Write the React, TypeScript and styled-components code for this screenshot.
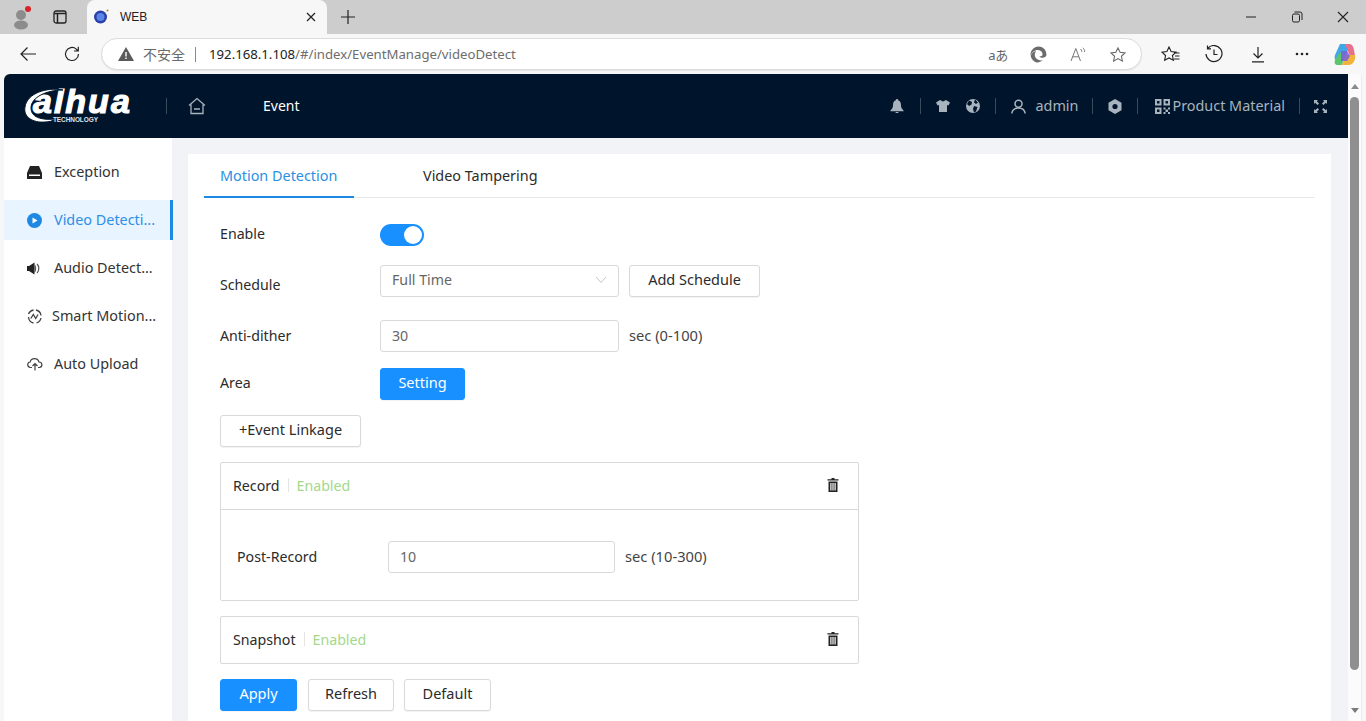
import React from "react";
import styled, { createGlobalStyle } from "styled-components";

const Global = createGlobalStyle`
  html, body { margin: 0; padding: 0; height: 721px; overflow: hidden; background: #f7f7f7; }
  * { box-sizing: border-box; }
  body { font-family: "Noto Sans", "Open Sans", "Noto Sans CJK SC", sans-serif; font-size: 14px; color: #2b2b2b; }
`;

const Shell = styled.div`display: flex; flex-direction: column; width: 1366px; height: 721px; overflow: hidden;`;

const TabStrip = styled.div`display: flex; align-items: flex-start; height: 34px; background: #cdcdcd; flex: none;`;
const StripIcon = styled.div<{ $w: number }>`width: ${p => p.$w}px; height: 34px; display: flex; align-items: center; justify-content: center; flex: none;`;
const BrowserTab = styled.div`
  width: 240px; height: 34px; margin-left: 11px; background: #f7f7f7; border-radius: 8px 8px 0 0;
  display: flex; align-items: center; padding: 0 11px 0 6px; font-size: 12px; color: #222; flex: none;
`;
const TabTitle = styled.span`margin-left: 11px; flex: 1; font-family: "Liberation Sans", sans-serif;`;
const Spacer = styled.div`flex: 1;`;
const WinBtn = styled.div`width: 46px; height: 34px; display: flex; align-items: center; justify-content: center; flex: none;`;

const Toolbar = styled.div`display: flex; align-items: center; height: 40px; background: #f7f7f7; flex: none;`;
const ToolBtn = styled.div<{ $w: number }>`width: ${p => p.$w}px; height: 40px; display: flex; align-items: center; justify-content: center; flex: none;`;
const AddressBar = styled.div`
  width: 1041px; height: 32px; margin: 0 8px 0 12px; flex: none; background: #fff; border: 1px solid #dcdcdc; border-radius: 16px;
  display: flex; align-items: center; padding-left: 16px; font-size: 13.2px; color: #6d6d6d; box-shadow: 0 1px 1px #e4e4e4;
`;
const Insecure = styled.span`margin-left: 9px; color: #6a6a6a; font-size: 14px;`;
const AddrDivider = styled.span`width: 1px; height: 15px; background: #8a8a8a; margin: 0 13px 0 10px;`;
const Host = styled.span`color: #222;`;
const AddrIcons = styled.div`margin-left: auto; display: flex; align-items: center; padding-right: 3px;`;
const AddrIcon = styled.span`width: 40px; display: flex; justify-content: center; align-items: center;`;
const Translate = styled.span`font-size: 13px; color: #666; letter-spacing: -0.5px; font-family: "Noto Sans", "Noto Sans CJK JP", sans-serif;`;

const Viewport = styled.div`flex: 1; display: flex; padding: 0 4px; min-height: 0;`;
const Frame = styled.div`flex: 1; display: flex; flex-direction: column; min-width: 0;`;
const Scrollbar = styled.div`width: 14px; flex: none; background: #fbfbfb; display: flex; flex-direction: column; align-items: center; border-right: 1px solid #ececec;`;
const ScrollUp = styled.div`width: 0; height: 0; margin-top: 10px; border-left: 4px solid transparent; border-right: 4px solid transparent; border-bottom: 5px solid #8a8a8a;`;
const ScrollThumb = styled.div`width: 9px; height: 573px; margin-top: 8px; background: #8f8f8f; border-radius: 4.5px;`;
const ScrollDown = styled.div`width: 0; height: 0; margin-top: 38px; border-left: 4px solid transparent; border-right: 4px solid transparent; border-top: 5px solid #7a7a7a;`;

const Header = styled.header`
  height: 64px; flex: none; background: #00152b; border-radius: 6px 0 0 0; display: flex; align-items: center; color: #fff;
`;
const LogoBox = styled.div`position: relative; width: 162px; height: 64px; flex: none;`;
const LogoWord = styled.span`
  position: absolute; left: 29px; top: 12px; font: italic 700 34px/30px "Liberation Sans", sans-serif; color: #fff; letter-spacing: 2px;
  -webkit-text-stroke: 1.2px #fff;
`;
const LogoSub = styled.span`position: absolute; left: 49px; top: 42px; font: 700 6.5px/7px "Liberation Sans", sans-serif; color: #dfe3e8; letter-spacing: -0.1px;`;
const LogoSwoosh = styled.svg`position: absolute; left: 20px; top: 15px;`;
const HeadDivider = styled.span<{ $m?: string }>`width: 1px; height: 16px; background: #3c4b5c; flex: none; margin: ${p => p.$m || "0"};`;
const HomeIcon = styled.div`margin-left: 21px; width: 18px; display: flex;`;
const NavLabel = styled.span`margin-left: 57px; font-size: 14px; color: #fff; padding-bottom: 2px;`;
const HeadRight = styled.div`margin-left: auto; display: flex; align-items: center; height: 64px; padding-right: 21px; color: #a9b3be; font-size: 14.4px;`;
const HeadIcon = styled.span<{ $m?: string }>`display: flex; flex: none; margin: ${p => p.$m || "0"};`;
const HeadText = styled.span<{ $ml: number }>`margin-left: ${p => p.$ml}px; padding-bottom: 2px;`;

const Body = styled.div`flex: 1; display: flex; min-height: 0; background: #f1f3f6;`;
const Sidebar = styled.nav`width: 168px; flex: none; background: #fff; padding-top: 14px;`;
const SideItem = styled.div<{ $active?: boolean }>`
  height: 40px; margin: 0 ${p => (p.$active ? "-1px" : "0")} 8px 0; display: flex; align-items: center; padding: 0 0 2px 23px;
  color: ${p => (p.$active ? "#2d8fe6" : "#333")}; background: ${p => (p.$active ? "#e8f4ff" : "transparent")};
  border-right: ${p => (p.$active ? "3px solid #1e88e5" : "0")};
  white-space: nowrap; font-size: 14.4px;
`;
const SideIcon = styled.span<{ $w: number }>`width: ${p => p.$w}px; flex: none; display: flex; align-items: center; padding-top: 2px;`;

const Content = styled.main`flex: 1; padding: 16px 17px 0 16px; min-width: 0;`;
const Card = styled.section`background: #fff; height: 600px; padding: 0 16px;`;
const Tabs = styled.div`height: 44px; display: flex; border-bottom: 1px solid #e8e8e8;`;
const TabItem = styled.div<{ $active?: boolean; $w: number }>`
  width: ${p => p.$w}px; height: 44px; padding: 12px 16px 0; font-size: 14.4px; line-height: 20px; white-space: nowrap;
  color: ${p => (p.$active ? "#2b8fe3" : "#2b2b2b")}; border-bottom: ${p => (p.$active ? "2px solid #1e88e5" : "0")};
  margin-right: ${p => (p.$active ? "53px" : "0")};
`;
const Form = styled.div`padding: 0 0 0 16px; width: 655px;`;
const Row = styled.div<{ $h: number; $mt?: number }>`display: flex; align-items: center; height: ${p => p.$h}px; margin-top: ${p => p.$mt || 0}px;`;
const Label = styled.span<{ $w?: number; $dy?: number }>`width: ${p => p.$w || 160}px; flex: none; position: relative; top: ${p => p.$dy || 0}px; font-size: 14.2px;`;
const Toggle = styled.div`width: 44px; height: 22px; border-radius: 11px; background: #1890ff; position: relative;`;
const Knob = styled.span`position: absolute; right: 2px; top: 2px; width: 18px; height: 18px; border-radius: 50%; background: #fff;`;
const Field = styled.div<{ $w: number; $pb?: number }>`
  width: ${p => p.$w}px; height: 32px; flex: none; border: 1px solid #d9d9d9; border-radius: 3px; background: #fff; padding: 0 11px ${p => p.$pb ?? 1}px;
  display: flex; align-items: center; justify-content: space-between; color: #666; font-size: 14.2px;
`;
const Btn = styled.div<{ $w: number; $primary?: boolean; $ml?: number }>`
  width: ${p => p.$w}px; height: 32px; flex: none; margin-left: ${p => p.$ml || 0}px; border-radius: 3px; padding-bottom: 5px;
  display: flex; align-items: center; justify-content: center; font-size: 14.5px;
  background: ${p => (p.$primary ? "#1890ff" : "#fff")}; color: ${p => (p.$primary ? "#fff" : "#2b2b2b")};
  border: 1px solid ${p => (p.$primary ? "#1890ff" : "#d9d9d9")};
  box-shadow: 0 1px 1px rgba(0,0,0,0.05);
`;
const Unit = styled.span`margin-left: 10px; color: #444; white-space: nowrap; font-size: 14.7px; padding-bottom: 2px;`;
const Panel = styled.div<{ $mt: number }>`border: 1px solid #d9d9d9; margin-top: ${p => p.$mt}px; width: 639px; border-radius: 2px;`;
const PanelHead = styled.div`height: 46px; display: flex; align-items: center; padding: 0 19px 2px 12px; font-size: 14.2px;`;
const PanelBody = styled.div`border-top: 1px solid #d9d9d9; height: 91px; display: flex; align-items: center; padding: 3px 0 0 16px;`;
const PanelSep = styled.span`width: 1px; height: 14px; background: #e4e4e4; margin: 0 8px;`;
const Enabled = styled.span`color: #a3d98c;`;
const TrashWrap = styled.span`margin-left: auto; display: flex;`;

const Trash = () => (
  <svg width="12" height="14" viewBox="0 0 12 14" fill="#222">
    <path d="M4.5 0h3v1.2H11.500v1.300H.5V1.200h4zM1.500 3.500h9V14h-9zM3.300 5v7.500h1.200V5zM5.400 5v7.500h1.200V5zM7.500 5v7.500h1.200V5z" fillRule="evenodd" />
  </svg>
);

export default function App() {
  return (
    <Shell>
      <Global />
      <TabStrip>
        <StripIcon $w={44}>
          <svg width="24" height="26" viewBox="0 0 24 26">
            <circle cx="11" cy="11" r="5" fill="#8c8c8c" />
            <ellipse cx="11" cy="21" rx="7" ry="4.500" fill="#8c8c8c" />
            <circle cx="18" cy="5" r="3" fill="#d8232a" />
          </svg>
        </StripIcon>
        <StripIcon $w={32}>
          <svg width="14" height="14" viewBox="0 0 14 14" fill="none" stroke="#222" strokeWidth="1.300">
            <rect x="1" y="1" width="12" height="12" rx="2" />
            <path d="M1 3.500h12M4.500 3.500V13" strokeWidth="1.500" />
          </svg>
        </StripIcon>
        <BrowserTab>
          <svg width="16" height="16" viewBox="0 0 16 16">
            <circle cx="7.500" cy="8" r="6.500" fill="#2b3fa8" />
            <circle cx="7.500" cy="8" r="4" fill="#5a86e8" />
            <circle cx="14.500" cy="1.500" r="1" fill="#c9772e" />
          </svg>
          <TabTitle>WEB</TabTitle>
          <svg width="10" height="10" viewBox="0 0 10 10" stroke="#222" strokeWidth="1.200">
            <path d="M1 1l8 8M9 1l-8 8" />
          </svg>
        </BrowserTab>
        <StripIcon $w={42}>
          <svg width="16" height="16" viewBox="0 0 16 16" stroke="#222" strokeWidth="1.200">
            <path d="M8 1v14M1 8h14" />
          </svg>
        </StripIcon>
        <Spacer />
        <WinBtn>
          <svg width="12" height="2" viewBox="0 0 12 2" stroke="#222"><path d="M1 1h10" /></svg>
        </WinBtn>
        <WinBtn>
          <svg width="12" height="12" viewBox="0 0 12 12" fill="none" stroke="#222">
            <rect x="1.500" y="3" width="7" height="8" rx="1.500" />
            <path d="M3.500 1h5.500a2 2 0 0 1 2 2v6" />
          </svg>
        </WinBtn>
        <WinBtn>
          <svg width="12" height="12" viewBox="0 0 12 12" stroke="#222" strokeWidth="1.100"><path d="M1 1l10 10M11 1L1 11" /></svg>
        </WinBtn>
      </TabStrip>
      <Toolbar>
        <ToolBtn $w={55}>
          <svg width="18" height="16" viewBox="0 0 18 16" fill="none" stroke="#222" strokeWidth="1.200"><path d="M17 8H2M8.500 1.500L2 8l6.500 6.500" /></svg>
        </ToolBtn>
        <ToolBtn $w={34}>
          <svg width="18" height="18" viewBox="0 0 18 18" fill="none" stroke="#222" strokeWidth="1.200">
            <path d="M15.500 9a6.500 6.500 0 1 1-2.200-4.900L15 6M15.300 1.800V6H11" />
          </svg>
        </ToolBtn>
        <AddressBar>
          <svg width="16" height="14" viewBox="0 0 16 14"><path d="M8 0l8 14H0z" fill="#5a5a5a" /><path d="M7.300 5h1.400v4.500H7.300zM7.300 10.500h1.400V12H7.300z" fill="#fff" /></svg>
          <Insecure>不安全</Insecure>
          <AddrDivider />
          <span><Host>192.168.1.108</Host>/#/index/EventManage/videoDetect</span>
          <AddrIcons>
            <AddrIcon><Translate>aあ</Translate></AddrIcon>
            <AddrIcon>
              <svg width="17" height="17" viewBox="0 0 17 17"><path d="M8.500.5a8 8 0 0 1 8 8c0 2-2 3.300-4 3.300-1.700 0-3-.6-3-1.500 2.500 0 3.300-1 3-2.600C12 4.700 9 3.500 6 4.200 3 5 1 7.500.5 9.500.2 4.500 4 .5 8.500.5zM.7 10c.5-2.500 3-4.700 5.500-4.700-1.700 1.700-2 5 .2 7.300 1.500 1.500 4 2.400 6.300 1.500-1.500 1.600-4 2.600-6.200 2.300C3.500 15.500 1.300 13 .7 10z" fill="#6c6c6c" /></svg>
            </AddrIcon>
            <AddrIcon>
              <svg width="17" height="15" viewBox="0 0 17 15" fill="none" stroke="#777" strokeWidth="1">
                <path d="M1 14L5.800 1.500 10.500 14M2.600 9.800h6.400M10.500 2c.9.700 1.300 1.500 1.300 2.800M12.800 .8c1.300 1.100 1.800 2.400 1.800 4.200" />
              </svg>
            </AddrIcon>
            <AddrIcon>
              <svg width="16" height="15" viewBox="0 0 18 17" fill="none" stroke="#666" strokeWidth="1.200"><path d="M9 1l2.400 5 5.600.7-4.100 3.800 1.100 5.500L9 13.200 4 16l1.100-5.500L1 6.700 6.600 6z" /></svg>
            </AddrIcon>
          </AddrIcons>
        </AddressBar>
        <ToolBtn $w={40}>
          <svg width="19" height="17" viewBox="0 0 19 17" fill="none" stroke="#222" strokeWidth="1.100"><path d="M8 1l2.100 4.500 4.900.6-3.600 3.400 1 4.800L8 11.900 3.600 14.300l1-4.800L1 6.100l4.900-.6zM13 7h5.500M14 10h4.500M13 13h5.500" /></svg>
        </ToolBtn>
        <ToolBtn $w={47}>
          <svg width="18" height="18" viewBox="0 0 18 18" fill="none" stroke="#222" strokeWidth="1.200"><path d="M3 3.200A8 8 0 1 1 1 9M2.500 .5v3.300H6M9 4.500V9.500h3.500" /></svg>
        </ToolBtn>
        <ToolBtn $w={42}>
          <svg width="14" height="17" viewBox="0 0 14 17" fill="none" stroke="#222" strokeWidth="1.200"><path d="M7 1v11M2.500 7.500L7 12l4.500-4.500M1 15.800h12" /></svg>
        </ToolBtn>
        <ToolBtn $w={45}>
          <svg width="14" height="4" viewBox="0 0 14 4" fill="#222"><circle cx="2" cy="2" r="1.300" /><circle cx="7" cy="2" r="1.300" /><circle cx="12" cy="2" r="1.300" /></svg>
        </ToolBtn>
        <ToolBtn $w={40}>
          <svg width="23" height="23" viewBox="0 0 23 23">
            <path d="M7 1h6l3 4-6 13H5C2 18 1 15 2 12z" fill="#3fa7e8" />
            <path d="M12 1h4c3 0 4 2 5 6l1 6-5 0-3-7z" fill="#e8708a" />
            <path d="M5 12l4-4 3 5-3 9H5c-3 0-4-2-3-5z" fill="#5cc46e" />
            <path d="M13 12h9c1 4-2 10-6 10H9z" fill="#f2b33d" />
            <path d="M8 8h6l3 5-3 5H8z" fill="#7a5fd8" opacity="0.85" />
          </svg>
        </ToolBtn>
      </Toolbar>
      <Viewport>
        <Frame>
          <Header>
            <LogoBox>
              <LogoWord>alhua</LogoWord>
              <LogoSwoosh width="42" height="35" viewBox="0 0 42 35">
                <path d="M39 1C23-2 3 4 1 18c-2 10 8 16 20 15 4 0 8-1 10-3-10 1-24 0-24-11C7 8 23 1 39 1z" fill="#fff" stroke="#00152b" strokeWidth="1" />
              </LogoSwoosh>
              <LogoSub>TECHNOLOGY</LogoSub>
            </LogoBox>
            <HeadDivider />
            <HomeIcon>
              <svg width="18" height="18" viewBox="0 0 18 18" fill="none" stroke="#a9b3be" strokeWidth="1.300">
                <path d="M1 8.500L9 1.500l8 7M3 7.500V16.500h12V7.500M6 12h6" />
              </svg>
            </HomeIcon>
            <NavLabel>Event</NavLabel>
            <HeadRight>
              <HeadIcon>
                <svg width="14" height="14" viewBox="0 0 14 14" fill="#a9b3be"><path d="M7 0c.8 0 1.200.6 1.200 1.300C10.500 2 11 4 11 6.500c0 2 1 3.500 2.500 5v.8H.5v-.8C2 10 3 8.500 3 6.500 3 4 3.500 2 5.800 1.300 5.800.6 6.200 0 7 0zM5.500 13h3a1.500 1.500 0 0 1-3 0z" /></svg>
              </HeadIcon>
              <HeadDivider $m="0 15px 0 16px" />
              <HeadIcon>
                <svg width="14" height="12" viewBox="0 0 14 12" fill="#a9b3be"><path d="M4 0l3 1.500L10 0l4 2.500-1.500 3L11 5v7H3V5l-1.500.5L0 2.500z" /></svg>
              </HeadIcon>
              <HeadIcon $m="0 0 0 16px">
                <svg width="14" height="14" viewBox="0 0 14 14"><circle cx="7" cy="7" r="7" fill="#a9b3be" /><path d="M3 1.500l3 1.500-.5 2.500L3 7 1 5zM8 7l3.500 1-1.500 4.500-2 1L7 10zM9 .5l3 3-2 1.500-2-1.500z" fill="#00152b" /></svg>
              </HeadIcon>
              <HeadDivider $m="0 15px 0 15px" />
              <HeadIcon>
                <svg width="15" height="15" viewBox="0 0 15 15" fill="none" stroke="#a9b3be" strokeWidth="1.500"><circle cx="7.500" cy="4.800" r="3.500" /><path d="M.8 14.500c.5-3.500 3-5.500 6.700-5.500s6.200 2 6.700 5.500" /></svg>
              </HeadIcon>
              <HeadText $ml={9}>admin</HeadText>
              <HeadDivider $m="0 15px 0 14px" />
              <HeadIcon>
                <svg width="14" height="15" viewBox="0 0 14 15"><path fillRule="evenodd" d="M7 0l6.500 3.700v7.600L7 15 .5 11.300V3.700z" fill="#a9b3be" /><circle cx="7" cy="7.500" r="2.600" fill="#00152b" /></svg>
              </HeadIcon>
              <HeadDivider $m="0 17px 0 15px" />
              <HeadIcon>
                <svg width="15" height="15" viewBox="0 0 15 15" fill="#a9b3be"><path d="M0 0h6.500v6.500H0zM2 2v2.500h2.500V2zM8.500 0H15v6.500H8.500zM10.500 2v2.500H13V2zM0 8.500h6.500V15H0zM2 10.500V13h2.500v-2.500z" fillRule="evenodd" /><path d="M8.500 8.500h2v2h-2zM13 8.500h2v2h-2zM10.500 10.500H13V13h-2.500zM8.500 13h2v2h-2zM13 13h2v2h-2z" /></svg>
              </HeadIcon>
              <HeadText $ml={2}>Product Material</HeadText>
              <HeadDivider $m="0 14px 0 14px" />
              <HeadIcon>
                <svg width="13" height="13" viewBox="0 0 13 13" fill="#a9b3be"><path d="M0 0h4L2.800 1.200 5 3.500 3.500 5 1.200 2.800 0 4zM13 0v4l-1.200-1.200L9.500 5 8 3.500l2.200-2.300L9 0zM0 13V9l1.200 1.200L3.500 8 5 9.500l-2.200 2.300L4 13zM13 13H9l1.200-1.200L8 9.500 9.500 8l2.300 2.200L13 9z" /></svg>
              </HeadIcon>
            </HeadRight>
          </Header>
          <Body>
            <Sidebar>
              <SideItem>
                <SideIcon $w={27}>
                  <svg width="15" height="13" viewBox="0 0 15 13" fill="#222"><path d="M3 0h9l3 7v6H0V7zM2 8.500v1.500h11V8.500z" fillRule="evenodd" /></svg>
                </SideIcon>
                Exception
              </SideItem>
              <SideItem $active>
                <SideIcon $w={27}>
                  <svg width="15" height="15" viewBox="0 0 15 15"><circle cx="7.500" cy="7.500" r="7.500" fill="#1e88e5" /><path d="M5.500 4.500l5 3-5 3z" fill="#fff" /></svg>
                </SideIcon>
                Video Detecti...
              </SideItem>
              <SideItem>
                <SideIcon $w={27}>
                  <svg width="15" height="13" viewBox="0 0 15 13"><path d="M0 4h2L7.500 .5v12L2 9H0z" fill="#222" /><path d="M7.500 2.500c2.200 1 2.200 7 0 8z" fill="#555" /><path d="M10 2c2.400 2 2.400 7 0 9" fill="none" stroke="#555" strokeWidth="1.200" /></svg>
                </SideIcon>
                Audio Detect...
              </SideItem>
              <SideItem>
                <SideIcon $w={25}>
                  <svg width="15" height="15" viewBox="0 0 15 15" fill="none" stroke="#444" strokeWidth="1.300">
                    <path d="M1.500 5a6.500 6.500 0 0 1 5-4M9 1a6.500 6.500 0 0 1 5 5.500M14 9a6.500 6.500 0 0 1-4.500 5M6.500 14a6.500 6.500 0 0 1-5-6" />
                    <path d="M3.800 9.500L6.300 5.500l2.400 4L11 5.500" />
                  </svg>
                </SideIcon>
                Smart Motion...
              </SideItem>
              <SideItem>
                <SideIcon $w={27}>
                  <svg width="16" height="14" viewBox="0 0 16 14" fill="none" stroke="#444" strokeWidth="1.200">
                    <path d="M5 10.500H3.500C-.5 10 .3 5 3.200 5 4 .5 11 .5 12 5c3.500 0 4 5 .5 5.500H11M8 13.500V6.500M5.500 9L8 6.500 10.500 9" />
                  </svg>
                </SideIcon>
                Auto Upload
              </SideItem>
            </Sidebar>
            <Content>
              <Card>
                <Tabs>
                  <TabItem $active $w={150}>Motion Detection</TabItem>
                  <TabItem $w={180}>Video Tampering</TabItem>
                </Tabs>
                <Form>
                  <Row $h={32} $mt={21}>
                    <Label $dy={-2}>Enable</Label>
                    <Toggle><Knob /></Toggle>
                  </Row>
                  <Row $h={32} $mt={14}>
                    <Label $dy={3}>Schedule</Label>
                    <Field $w={239} $pb={3}>
                      Full Time
                      <svg width="12" height="8" viewBox="0 0 12 8" fill="none" stroke="#c4c4c4"><path d="M1 1l5 5.500L11 1" /></svg>
                    </Field>
                    <Btn $w={131} $ml={10}>Add Schedule</Btn>
                  </Row>
                  <Row $h={32} $mt={23}>
                    <Label $dy={-1}>Anti-dither</Label>
                    <Field $w={239}>30</Field>
                    <Unit>sec (0-100)</Unit>
                  </Row>
                  <Row $h={32} $mt={16}>
                    <Label $dy={-2}>Area</Label>
                    <Btn $w={85} $primary>Setting</Btn>
                  </Row>
                  <Row $h={32} $mt={15}>
                    <Btn $w={141}>+Event Linkage</Btn>
                  </Row>
                  <Panel $mt={15}>
                    <PanelHead>
                      Record<PanelSep /><Enabled>Enabled</Enabled>
                      <TrashWrap><Trash /></TrashWrap>
                    </PanelHead>
                    <PanelBody>
                      <Label $w={151}>Post-Record</Label>
                      <Field $w={227}>10</Field>
                      <Unit>sec (10-300)</Unit>
                    </PanelBody>
                  </Panel>
                  <Panel $mt={15}>
                    <PanelHead>
                      Snapshot<PanelSep /><Enabled>Enabled</Enabled>
                      <TrashWrap><Trash /></TrashWrap>
                    </PanelHead>
                  </Panel>
                  <Row $h={32} $mt={15}>
                    <Btn $w={77} $primary>Apply</Btn>
                    <Btn $w={86} $ml={11}>Refresh</Btn>
                    <Btn $w={87} $ml={10}>Default</Btn>
                  </Row>
                </Form>
              </Card>
            </Content>
          </Body>
        </Frame>
        <Scrollbar>
          <ScrollUp />
          <ScrollThumb />
          <ScrollDown />
        </Scrollbar>
      </Viewport>
    </Shell>
  );
}
